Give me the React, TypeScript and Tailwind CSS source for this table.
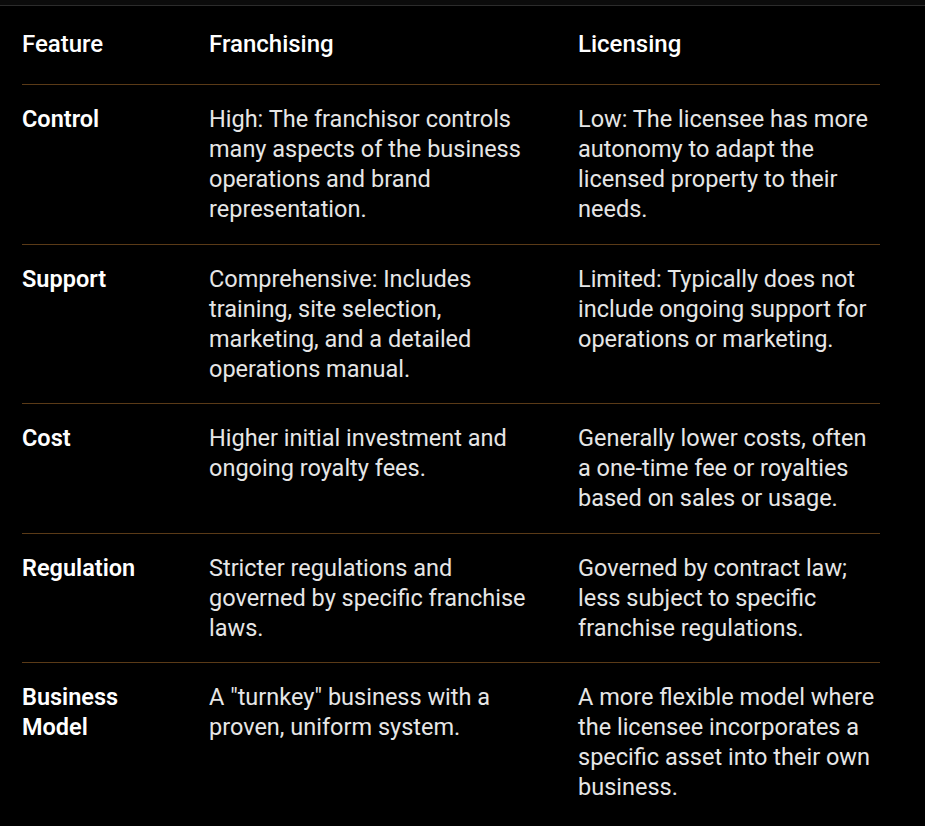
const ROWS = [
  {
    feature: 'Control',
    franchising: 'High: The franchisor controls many aspects of the business operations and brand representation.',
    licensing: 'Low: The licensee has more autonomy to adapt the licensed property to their needs.',
  },
  {
    feature: 'Support',
    franchising: 'Comprehensive: Includes training, site selection, marketing, and a detailed operations manual.',
    licensing: 'Limited: Typically does not include ongoing support for operations or marketing.',
  },
  {
    feature: 'Cost',
    franchising: 'Higher initial investment and ongoing royalty fees.',
    licensing: 'Generally lower costs, often a one-time fee or royalties based on sales or usage.',
  },
  {
    feature: 'Regulation',
    franchising: 'Stricter regulations and governed by specific franchise laws.',
    licensing: 'Governed by contract law; less subject to specific franchise regulations.',
  },
  {
    feature: 'Business Model',
    franchising: 'A "turnkey" business with a proven, uniform system.',
    licensing: 'A more flexible model where the licensee incorporates a specific asset into their own business.',
  },
]

export default function App() {
  return (
    <div className="min-h-screen bg-black" style={{ fontFamily: 'Roboto, "Noto Sans", sans-serif' }}>
      <div className="h-[6px] bg-[#0b0b0b] border-b border-[#2c2c2c]"></div>
      <div className="mx-[22px] w-[858px]">
        {/* header */}
        <div className="grid grid-cols-[187px_369px_302px] border-b border-[#5a3a17] pt-[23px] pb-[25px] text-[24px] leading-[30px] font-medium text-white">
          <div>Feature</div>
          <div>Franchising</div>
          <div>Licensing</div>
        </div>

        {ROWS.map((r, i) => (
          <div
            key={i}
            className={`grid grid-cols-[187px_369px_302px] py-[19.25px] text-[23.5px] leading-[30px] ${i < ROWS.length - 1 ? 'border-b border-[#5a3a17]' : ''}`}
          >
            <div className="font-semibold text-white pr-6">{r.feature}</div>
            <div className="text-[#e6e6e6] pr-[30px]">{r.franchising}</div>
            <div className="text-[#e6e6e6]">{r.licensing}</div>
          </div>
        ))}
      </div>
    </div>
  )
}
